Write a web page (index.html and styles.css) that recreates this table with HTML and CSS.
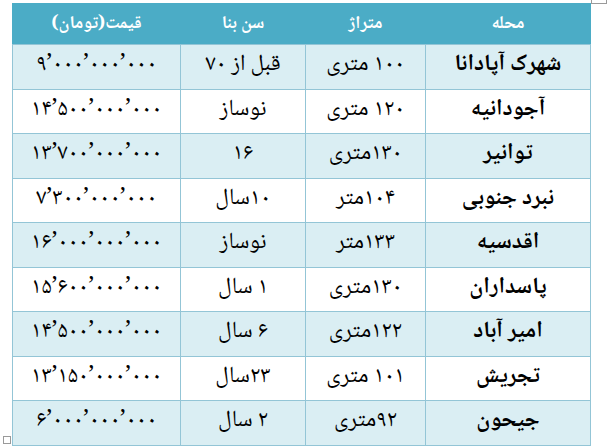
FILE: index.html
```html
<!DOCTYPE html>
<html lang="fa" dir="rtl">
<head>
<meta charset="utf-8">
<title>قیمت مسکن</title>
<link rel="stylesheet" href="styles.css">
</head>
<body>
<div class="page">
  <span class="handle handle-top"></span>
  <table class="prices">
    <colgroup>
      <col class="c-name"><col class="c-area"><col class="c-age"><col class="c-price">
    </colgroup>
    <thead>
      <tr><th>محله</th><th>متراژ</th><th>سن بنا</th><th>قیمت(تومان)</th></tr>
    </thead>
    <tbody>
      <tr class="tint"><td class="name">شهرک آپادانا</td><td>۱۰۰ متری</td><td>قبل از ۷۰</td><td class="num">۹’۰۰۰’۰۰۰’۰۰۰</td></tr>
      <tr><td class="name">آجودانیه</td><td>۱۲۰ متری</td><td>نوساز</td><td class="num">۱۴’۵۰۰’۰۰۰’۰۰۰</td></tr>
      <tr class="tint"><td class="name">توانیر</td><td>۱۳۰متری</td><td>۱۶</td><td class="num">۱۳’۷۰۰’۰۰۰’۰۰۰</td></tr>
      <tr><td class="name">نبرد جنوبی</td><td>۱۰۴متر</td><td>۱۰سال</td><td class="num">۷’۳۰۰’۰۰۰’۰۰۰</td></tr>
      <tr class="tint"><td class="name">اقدسیه</td><td>۱۳۳متر</td><td>نوساز</td><td class="num">۱۶’۰۰۰’۰۰۰’۰۰۰</td></tr>
      <tr><td class="name">پاسداران</td><td>۱۳۰متری</td><td>۱ سال</td><td class="num">۱۵’۶۰۰’۰۰۰’۰۰۰</td></tr>
      <tr class="tint"><td class="name">امیر آباد</td><td>۱۲۲متری</td><td>۶ سال</td><td class="num">۱۴’۵۰۰’۰۰۰’۰۰۰</td></tr>
      <tr><td class="name">تجریش</td><td>۱۰۱ متری</td><td>۲۳سال</td><td class="num">۱۳’۱۵۰’۰۰۰’۰۰۰</td></tr>
      <tr class="tint"><td class="name">جیحون</td><td>۹۲متری</td><td>۲ سال</td><td class="num">۶’۰۰۰’۰۰۰’۰۰۰</td></tr>
    </tbody>
  </table>
  <span class="handle handle-bottom"></span>
</div>
</body>
</html>
```
FILE: styles.css
```css
html, body {
  margin: 0;
  padding: 0;
  background: #ffffff;
}

.page {
  position: relative;
  direction: ltr;
  width: 607px;
  height: 447px;
  padding: 3px 0 0 12px;
  box-sizing: border-box;
}

.prices {
  direction: rtl;
  border-collapse: collapse;
  table-layout: fixed;
  width: 578px;
  font-family: "Noto Naskh Arabic", "Noto Sans Arabic", "DejaVu Sans", sans-serif;
  color: #000000;
}

.c-price { width: 168px; }
.c-age { width: 125px; }
.c-area { width: 120px; }
.c-name { width: 165px; }

.prices th {
  height: 40px;
  padding: 0;
  background: #4bacc6;
  color: #ffffff;
  font-size: 18px;
  font-weight: bold;
  text-align: center;
  border: 1px solid #4bacc6;
  border-bottom-color: #93c5d6;
}

.prices td {
  height: 41px;
  padding: 0 0 2.5px 0;
  font-size: 23px;
  line-height: 1;
  text-align: center;
  vertical-align: middle;
  border: 1px solid #93c5d6;
  white-space: nowrap;
}

.prices tr.tint td {
  background: #daeef3;
}

.prices td.name {
  font-weight: bold;
  font-size: 23px;
}

.prices td.num {
  direction: ltr;
  letter-spacing: 0.5px;
}

.handle {
  position: absolute;
  box-sizing: border-box;
  border: 1px solid #9a9a9a;
  background: #ffffff;
}

.handle-top {
  left: 591px;
  top: -12px;
  width: 16px;
  height: 16px;
}

.handle-bottom {
  left: 3px;
  top: 436px;
  width: 8px;
  height: 8px;
}
```
